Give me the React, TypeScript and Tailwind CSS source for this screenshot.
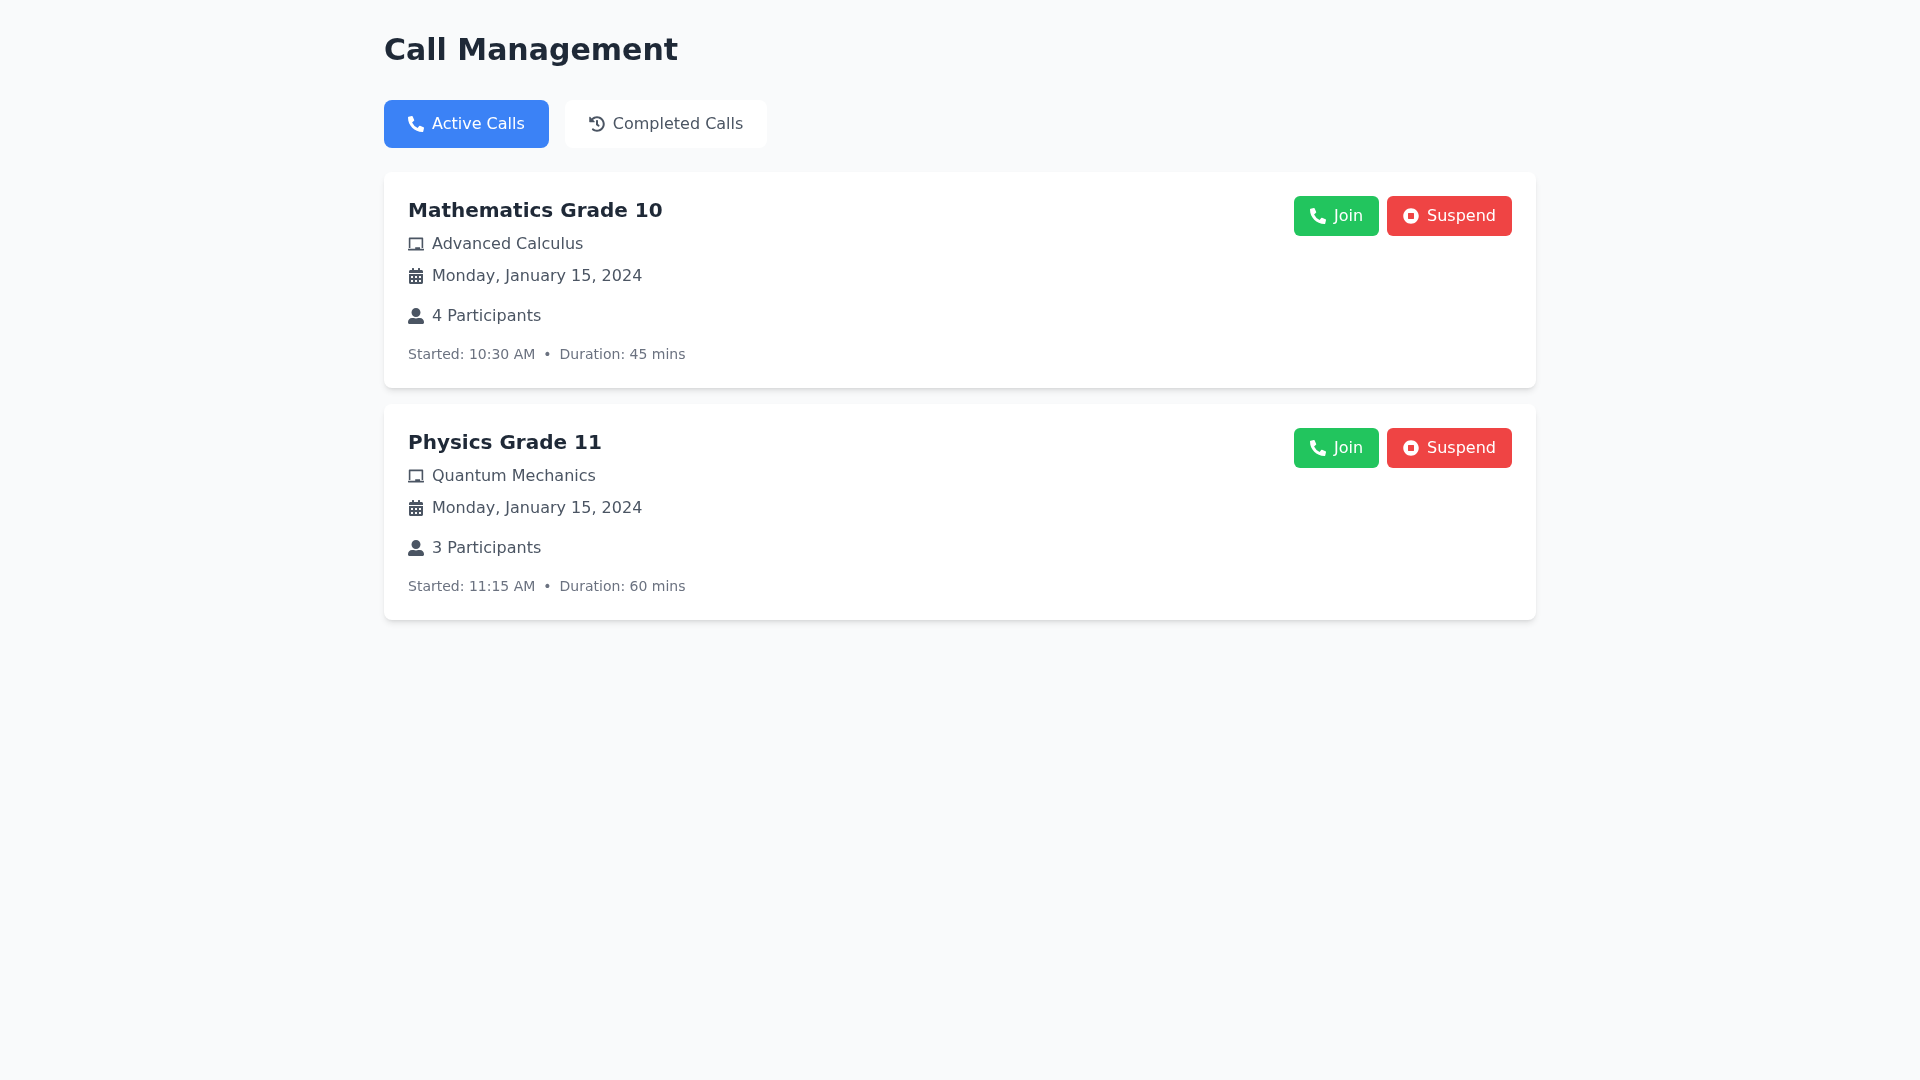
import { FaCalendarAlt, FaChalkboard, FaHistory, FaPhoneAlt, FaStopCircle, FaUserAlt } from "react-icons/fa";

const calls = [
  {
    title: "Mathematics Grade 10",
    topic: "Advanced Calculus",
    date: "Monday, January 15, 2024",
    participants: "4 Participants",
    started: "10:30 AM",
    duration: "45 mins",
  },
  {
    title: "Physics Grade 11",
    topic: "Quantum Mechanics",
    date: "Monday, January 15, 2024",
    participants: "3 Participants",
    started: "11:15 AM",
    duration: "60 mins",
  },
];

export default function App() {
  return (
    <div className="min-h-screen bg-[#f9fafb] font-['DejaVu_Sans',sans-serif]">
      <div className="mx-auto w-[1200px] px-6 py-8 will-change-transform">
        <h1 className="mb-8 text-3xl font-bold text-[#1f2937]">Call Management</h1>

        {/* Tabs */}
        <div className="mb-6 flex gap-4">
          <button
            type="button"
            className="flex items-center gap-2 rounded-lg bg-[#3b82f6] px-6 py-3 text-base text-white"
          >
            <FaPhoneAlt className="h-4 w-4" />
            Active Calls
          </button>
          <button
            type="button"
            className="flex items-center gap-2 rounded-lg bg-white px-6 py-3 text-base text-[#4b5563]"
          >
            <FaHistory className="h-4 w-4" />
            Completed Calls
          </button>
        </div>

        {/* Calls */}
        <div className="flex flex-col gap-4">
          {calls.map((call) => (
            <div key={call.title} className="flex justify-between rounded-lg bg-white p-6 shadow-md">
              <div>
                <h2 className="mb-2 text-xl font-bold text-[#1f2937]">{call.title}</h2>
                <div className="mb-2 flex items-center gap-2 text-base text-[#4b5563]">
                  <FaChalkboard className="h-4 w-4" />
                  {call.topic}
                </div>
                <div className="mb-4 flex items-center gap-2 text-base text-[#4b5563]">
                  <FaCalendarAlt className="h-4 w-4" />
                  {call.date}
                </div>
                <div className="flex items-center gap-2 text-base text-[#4b5563]">
                  <FaUserAlt className="h-4 w-4" />
                  {call.participants}
                </div>
                <div className="mt-4 flex gap-2 text-sm text-[#6b7280]">
                  <span>Started: {call.started}</span>
                  <span>•</span>
                  <span>Duration: {call.duration}</span>
                </div>
              </div>
              <div className="flex items-start gap-2">
                <button
                  type="button"
                  className="flex items-center gap-2 rounded-md bg-[#22c55e] px-4 py-2 text-base text-white"
                >
                  <FaPhoneAlt className="h-4 w-4" />
                  Join
                </button>
                <button
                  type="button"
                  className="flex items-center gap-2 rounded-md bg-[#ef4444] px-4 py-2 text-base text-white"
                >
                  <FaStopCircle className="h-4 w-4" />
                  Suspend
                </button>
              </div>
            </div>
          ))}
        </div>
      </div>
    </div>
  );
}
